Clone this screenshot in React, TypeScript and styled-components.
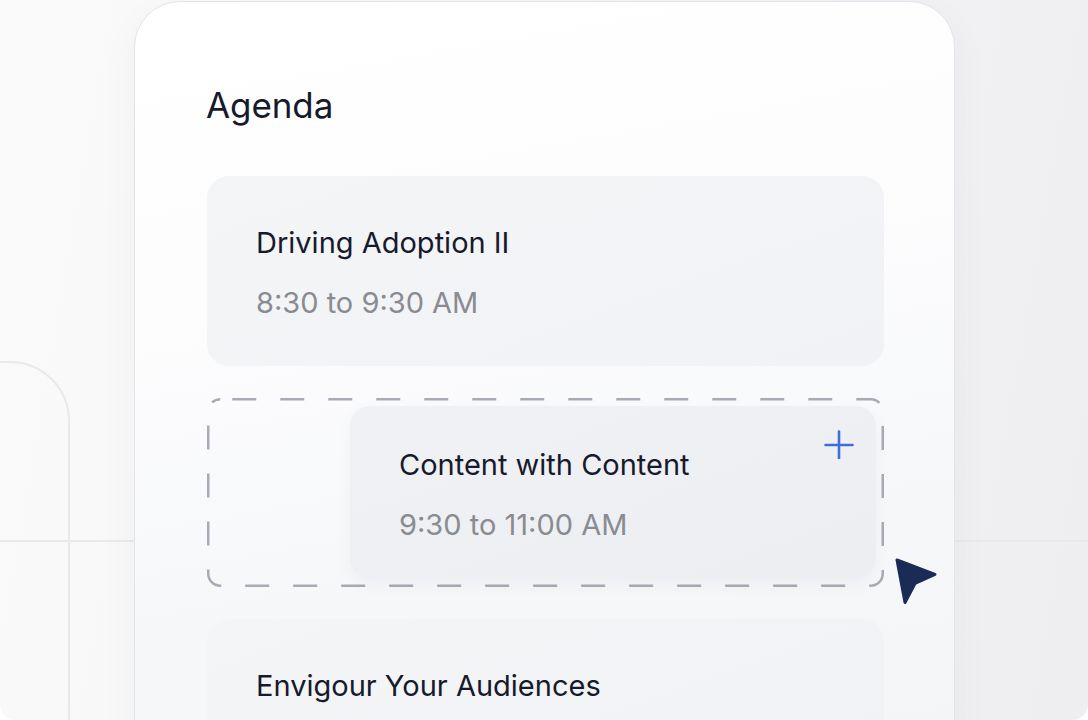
import React from 'react';
import styled, { createGlobalStyle } from 'styled-components';

const GlobalStyle = createGlobalStyle`
  html, body {
    margin: 0;
    padding: 0;
    background: #ffffff;
  }
  body {
    font-family: Inter, 'Noto Sans', 'Liberation Sans', sans-serif;
    -webkit-font-smoothing: antialiased;
  }
`;

const Stage = styled.div`
  position: relative;
  width: 1088px;
  height: 720px;
  overflow: hidden;
  border-radius: 0 0 16px 16px;
  box-sizing: border-box;
  padding: 1px 0 0 134px;
  background:
    linear-gradient(#e9e9ec, #e9e9ec) 0 540px / 100% 2px no-repeat,
    linear-gradient(100deg, #fafafb 0%, #f6f6f7 40%, #f1f1f3 75%, #eeeef0 100%);
  &::before {
    content: '';
    position: absolute;
    left: -120px;
    top: 361px;
    width: 186px;
    height: 500px;
    border: 2px solid #e9e9ec;
    border-radius: 0 60px 0 0;
  }
`;

const Card = styled.section`
  position: relative;
  width: 821px;
  height: 860px;
  box-sizing: border-box;
  padding: 82px 70px 0 71px;
  border: 1.5px solid #e2e3eb;
  border-radius: 46px;
  background: linear-gradient(170deg, #ffffff 0%, #fdfdfe 30%, #f6f7f9 65%, #f3f4f6 100%);
  box-shadow: 0 12px 40px rgba(30, 34, 60, 0.04);
`;

const Heading = styled.h1`
  margin: 0 0 50px;
  font-size: 35px;
  line-height: 42px;
  font-weight: 400;
  color: #171a2c;
  letter-spacing: -0.1px;
`;

const List = styled.div`
  display: flex;
  flex-direction: column;
  gap: 32px;
  margin-left: 1px;
`;

const Item = styled.div<{ $dragged?: boolean }>`
  position: relative;
  box-sizing: border-box;
  display: flex;
  flex-direction: column;
  gap: 25px;
  padding: ${(p) => (p.$dragged ? '41px 49px 37px' : '49px 49px 46px')};
  border-radius: ${(p) => (p.$dragged ? '20px' : '22px')};
  background: ${(p) =>
    p.$dragged
      ? 'linear-gradient(160deg, #f0f1f4 0%, #eceef1 100%)'
      : 'linear-gradient(160deg, #f4f5f7 0%, #f1f2f5 100%)'};
  box-shadow: ${(p) => (p.$dragged ? '0 6px 18px rgba(30, 34, 60, 0.04)' : 'none')};
  margin-left: ${(p) => (p.$dragged ? '135px' : '0')};
`;

const Title = styled.div`
  font-size: 29px;
  line-height: 35px;
  color: #171a2c;
`;

const Time = styled.div`
  font-size: 29px;
  line-height: 35px;
  color: #8a8b91;
`;

const DropZone = styled.div`
  position: relative;
  padding: 8px;
  box-sizing: border-box;
`;

const DashFrame = styled.svg`
  position: absolute;
  inset: 0;
  width: 100%;
  height: 100%;
  overflow: visible;
  pointer-events: none;
`;

const AddIcon = styled.svg`
  position: absolute;
  top: 21px;
  right: 21px;
  width: 32px;
  height: 32px;
`;

const Cursor = styled.svg`
  position: absolute;
  right: -55px;
  bottom: -19px;
  width: 46px;
  height: 50px;
`;

type Session = { title: string; time?: string };

const sessions: Session[] = [
  { title: 'Driving Adoption II', time: '8:30 to 9:30 AM' },
  { title: 'Content with Content', time: '9:30 to 11:00 AM' },
  { title: 'Envigour Your Audiences' },
];

const App: React.FC = () => {
  const [first, dragged, last] = sessions;
  return (
    <>
      <GlobalStyle />
      <Stage>
        <Card>
          <Heading>Agenda</Heading>
          <List>
            <Item>
              <Title>{first.title}</Title>
              <Time>{first.time}</Time>
            </Item>
            <DropZone>
              <DashFrame>
                <rect
                  x='1.25'
                  y='1.25'
                  width='calc(100% - 2.5px)'
                  height='calc(100% - 2.5px)'
                  rx='12'
                  fill='none'
                  stroke='#a9aab5'
                  strokeWidth='2.5'
                  strokeDasharray='24 24'
                  strokeDashoffset='-12'
                />
              </DashFrame>
              <Item $dragged>
                <Title>{dragged.title}</Title>
                <Time>{dragged.time}</Time>
                <AddIcon viewBox='0 0 32 32'>
                  <path
                    d='M16 4.5v27M2.5 18h27'
                    stroke='#3d6fd9'
                    strokeWidth='2.6'
                    strokeLinecap='round'
                    fill='none'
                  />
                </AddIcon>
              </Item>
              <Cursor viewBox='0 0 46 50'>
                <path
                  d='M4 4 L42 18.5 L22 27.5 L12 46.5 Z'
                  fill='#1a2b55'
                  stroke='#1a2b55'
                  strokeWidth='3'
                  strokeLinejoin='round'
                />
              </Cursor>
            </DropZone>
            <Item>
              <Title>{last.title}</Title>
            </Item>
          </List>
        </Card>
      </Stage>
    </>
  );
};

export default App;
